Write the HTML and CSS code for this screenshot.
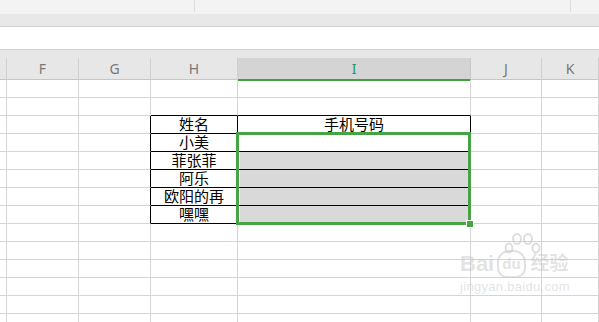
FILE: index.html
```html
<!DOCTYPE html>
<html lang="zh-CN">
<head>
  <meta charset="UTF-8" />
  <title>表格</title>
  <link rel="stylesheet" href="styles.css">
</head>
<body>
  <div class="toolbar">
    <div class="tb-seg tb-a"></div>
    <div class="tb-seg tb-b"></div>
    <div class="tb-seg tb-c"></div>
  </div>
  <div class="tabbar"></div>
  <div class="formula"></div>

  <div class="sheet">
    <div class="colhead">
      <div class="hc"></div>
      <div class="hc">F</div>
      <div class="hc">G</div>
      <div class="hc">H</div>
      <div class="hc sel">I</div>
      <div class="hc">J</div>
      <div class="hc">K</div>
    </div>
    <div class="grid" id="grid"></div>

    <div class="selection"><span class="handle"></span></div>

    <div class="watermark">
      <svg class="toes" width="40" height="22" viewBox="0 0 40 22">
        <g fill="none" stroke="rgba(200,200,200,0.6)" stroke-width="2">
          <ellipse cx="7" cy="16" rx="3.5" ry="4.5"/>
          <ellipse cx="15" cy="7" rx="4" ry="5"/>
          <ellipse cx="26" cy="7" rx="4" ry="5"/>
          <ellipse cx="34" cy="16" rx="3.5" ry="4.5"/>
        </g>
      </svg>
      <div class="wm-logo"><span>Bai</span><span class="paw">du</span><span class="wm-cn">经验</span></div>
      <div class="wm-url">jingyan.baidu.com</div>
    </div>
  </div>

  <script>
    const data = [
      ['姓名', '手机号码'],
      ['小美', ''],
      ['菲张菲', ''],
      ['阿乐', ''],
      ['欧阳的再', ''],
      ['嘿嘿', '']
    ];
    const grid = document.getElementById('grid');
    const firstRow = 2; // table starts on the third visible row
    for (let r = 0; r < 14; r++) {
      for (let c = 0; c < 7; c++) {
        const cell = document.createElement('div');
        cell.className = 'cell';
        const d = r - firstRow;
        if (d >= 0 && d < data.length) {
          if (c === 2) cell.classList.add('edge-r');
          if (c === 3 || c === 4) {
            cell.classList.add('tbl');
            cell.textContent = data[d][c - 3];
            if (c === 4 && d >= 2) cell.classList.add('fill');
          }
        }
        if (r === firstRow - 1 && (c === 3 || c === 4)) cell.classList.add('edge-b');
        grid.appendChild(cell);
      }
    }
  </script>
</body>
</html>
```

FILE: styles.css
```css
* { box-sizing: border-box; }
body {
  margin: 0;
  width: 599px;
  height: 322px;
  overflow: hidden;
  background: #fff;
  font-family: "Liberation Sans", "Noto Sans CJK SC", sans-serif;
}
.toolbar {
  height: 14px;
  background: #f3f3f3;
  display: flex;
}
.tb-seg { height: 12px; border-right: 1px solid #dedede; }
.tb-a { width: 195px; }
.tb-b { width: 376px; }
.tb-c { flex: 1; border-right: none; }
.tabbar {
  height: 13px;
  background: #e8e8e8;
  border-bottom: 1px solid #d3d3d3;
}
.formula {
  height: 23px;
  background: #fff;
  border-bottom: 1px solid #cfcfcf;
}
.sheet {
  position: relative;
}
.colhead {
  display: grid;
  grid-template-columns: 7px 72px 72px 87px 233px 71px 1fr;
  height: 30px;
  background: #e7e7e7;
  border-bottom: 1px solid #c6c6c6;
}
.hc {
  margin-top: 8px;
  border-right: 1px solid #d0d0d0;
  text-align: center;
  font-family: "Noto Sans", "Liberation Sans", sans-serif;
  font-size: 14px;
  line-height: 21px;
  color: #777;
}
.hc.sel {
  background: #d4d4d4;
  border-bottom: 2px solid #3fa140;
  border-right-color: #c8c8c8;
  color: #2f8f6f;
}
.grid {
  display: grid;
  grid-template-columns: 7px 72px 72px 87px 233px 71px 1fr;
  grid-auto-rows: 18px;
}
.cell {
  border-right: 1px solid #d4d4d4;
  border-bottom: 1px solid #d4d4d4;
  font-family: "Liberation Sans", "Noto Sans CJK SC", sans-serif;
  font-size: 15px;
  line-height: 17px;
  text-align: center;
  color: #000;
  white-space: nowrap;
}
.cell.edge-r { border-right-color: #000; }
.cell.edge-b { border-bottom-color: #000; }
.cell.tbl {
  border-right-color: #000;
  border-bottom-color: #000;
}
.cell.fill {
  background: #d9d9d9;
  box-shadow: inset 2px 0 0 #fff;
}
.selection {
  position: absolute;
  left: 236px;
  top: 82px;
  width: 235px;
  height: 93px;
  border: 3px solid #45a443;
  pointer-events: none;
}
.handle {
  position: absolute;
  right: -5px;
  bottom: -5px;
  width: 6px;
  height: 6px;
  background: #45a443;
  outline: 1px solid #fff;
}
.watermark {
  position: absolute;
  left: 460px;
  top: 182px;
  color: rgba(200, 200, 200, 0.5);
  font-family: "Liberation Sans", sans-serif;
  pointer-events: none;
}
.toes {
  display: block;
  margin-left: 42px;
  margin-bottom: -4px;
}
.wm-logo {
  font-size: 22px;
  font-weight: bold;
  line-height: 24px;
  display: flex;
  align-items: center;
}
.paw {
  font-size: 15px;
  border: 2px solid rgba(200, 200, 200, 0.55);
  border-radius: 12px 12px 10px 10px;
  padding: 0 3px;
  margin: 0 3px;
}
.wm-cn {
  font-family: "Liberation Sans", "Noto Sans CJK SC", sans-serif;
  font-size: 19px;
  margin-left: 2px;
}
.wm-url {
  font-size: 13px;
  line-height: 14px;
  margin-top: 2px;
  letter-spacing: 0.3px;
}
```
